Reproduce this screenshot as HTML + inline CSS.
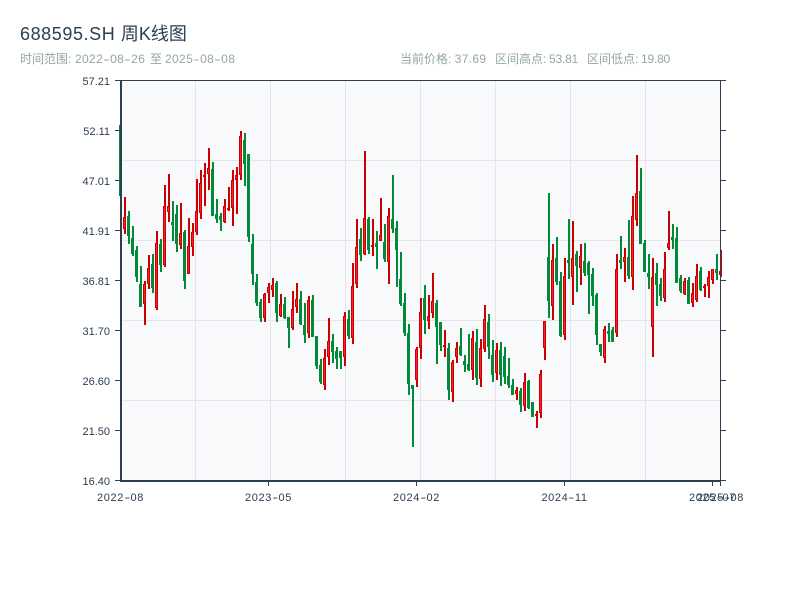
<!DOCTYPE html>
<html><head><meta charset="utf-8">
<style>
html,body{margin:0;padding:0;width:800px;height:600px;background:#fff;overflow:hidden}
body{font-family:"Liberation Sans","Noto Sans CJK SC",sans-serif;position:relative}
div.t{position:absolute;white-space:nowrap;line-height:1}
.title{left:20px;top:25px;font-size:18px;color:#2c3e50}
.title span{letter-spacing:.58px}
.sub{top:53px;font-size:12px;color:#95a5a6}
.n{letter-spacing:.35px}
.m{letter-spacing:-.2px}
.y{width:60px;left:50px;text-align:right;font-size:11px;color:#2c3e50}
.x{width:80px;text-align:center;font-size:11px;color:#2c3e50;top:492.5px;letter-spacing:.6px}
b{font-weight:normal;display:inline-block;text-align:center;transform:scaleX(1.6)}
.x b{width:6.6px;letter-spacing:0}
.sub b{width:7px;letter-spacing:0}
svg{position:absolute;left:0;top:0}
</style></head><body>
<svg width="800" height="600" viewBox="0 0 800 600" fill="none">
<rect x="121" y="81" width="600" height="400" fill="#f8f9fa"/>
<path d="M121 160.5H721M121 240.5H721M121 320.5H721M121 400.5H721M195.5 81V481M270.5 81V481M345.5 81V481M420.5 81V481M495.5 81V481M570.5 81V481M645.5 81V481" stroke="#e3e5ea" stroke-width="1"/>
<path stroke="#008a3a" stroke-width="2" d="M121 125V196M129 211V244M133 226V256M137 246V282M141 266V307M153 254V293M161 239V272M173 201V241M177 205V252M185 230V289M213 162V216M217 199V223M221 213V231M245 133V186M249 154V242M253 234V285M257 274V306M261 299V322M277 281V322M285 297V319M289 317V348M301 291V325M305 303V343M313 295V337M317 336V369M321 359V384M333 334V363M337 347V369M341 351V369M349 310V339M361 228V261M369 217V254M377 231V269M385 224V262M393 175V233M397 221V287M401 252V306M405 293V336M409 324V395M413 385V447M425 285V334M437 300V364M441 322V351M449 343V400M461 328V356M465 355V372M469 334V371M477 329V385M489 314V359M493 340V382M501 342V386M505 347V384M509 358V388M513 379V395M521 388V412M529 380V409M533 402V417M549 193V318M557 237V285M561 272V337M569 219V279M577 251V292M585 243V276M589 261V314M593 268V306M597 293V345M601 344V356M609 323V342M613 327V342M621 236V269M629 220V279M641 168V244M645 240V272M649 254V289M657 263V306M661 278V301M673 224V249M677 227V283M681 275V293M689 277V304M701 267V291M717 254V280"/>
<path stroke="#008a3a" stroke-width="3" transform="translate(-.5 0)" d="M121 125V196M129 216V236M133 238V254M137 250V277M141 284V307M153 264V288M161 244V265M173 222V225M177 214V244M185 232V281M213 169V216M217 214V219M221 216V220M245 140V164M249 154V237M253 244V274M257 282V303M261 302V318M277 283V313M285 304V318M289 317V328M301 299V324M305 325V335M313 300V337M317 336V366M321 365V382M333 341V352M337 351V359M341 351V358M349 319V336M361 239V255M369 219V250M377 243V247M385 242V259M393 219V229M397 228V250M401 279V304M405 303V333M409 333V384M413 385V389M425 298V320M437 303V327M441 322V345M449 348V390M461 346V355M465 361V365M469 364V370M477 342V378M489 322V347M493 355V375M501 350V375M505 356V377M509 376V385M513 385V395M521 391V405M529 381V408M533 402V417M549 257V301M557 258V282M561 281V336M569 260V263M577 254V266M585 261V273M589 263V275M593 274V296M597 295V335M601 344V352M609 331V334M613 330V342M621 260V263M629 257V276M641 191V244M645 243V272M649 273V277M657 273V285M661 284V296M673 237V240M677 238V283M681 278V291M689 280V304M701 271V290M717 269V273"/>
<path stroke="#cc0000" stroke-width="2" d="M125 197V234M145 281V325M149 255V289M157 231V310M165 185V267M169 174V222M181 203V249M189 218V274M193 223V256M197 179V235M201 170V219M205 163V206M209 148V190M225 199V223M229 187V211M233 170V226M237 167V214M241 131V180M265 293V322M269 283V303M273 278V297M281 294V317M293 291V330M297 283V313M309 296V338M325 349V390M329 318V365M345 312V366M353 263V344M357 219V288M365 151V255M373 219V256M381 198V241M389 208V284M417 347V387M421 298V359M429 295V329M433 273V318M445 330V357M453 360V402M457 342V363M473 331V380M481 339V387M485 305V352M497 343V380M517 387V400M525 373V411M537 411V428M541 370V418M545 321V360M553 244V320M565 258V340M573 221V305M581 244V285M605 326V363M617 254V337M625 248V282M633 196V290M637 155V226M653 258V357M665 252V302M669 211V250M685 278V295M693 283V307M697 264V302M705 284V297M709 271V298M713 269V284M721 250V277"/>
<path stroke="#cc0000" stroke-width="3" transform="translate(-.5 0)" d="M125 217V229M145 284V304M149 268V284M157 243V308M165 206V265M169 206V212M181 233V245M189 246V274M193 232V247M197 211V232M201 183V213M205 175V177M209 168V174M225 206V222M229 208V210M233 180V208M237 175V180M241 136V175M265 294V318M269 287V293M273 285V290M281 304V316M293 309V328M297 299V307M309 300V333M325 358V385M329 341V357M345 316V357M353 286V338M357 247V284M365 218V254M373 245V247M381 235V241M389 216V262M417 349V380M421 312V348M429 316V321M433 301V313M445 345V347M453 362V392M457 348V357M473 338V370M481 348V379M485 319V349M497 350V373M517 390V394M525 382V406M537 414V416M541 374V413M545 321V348M553 260V306M565 276V335M573 258V277M581 256V268M605 329V358M617 269V333M625 257V262M633 216V277M637 193V220M653 277V327M665 269V298M669 243V248M685 281V294M693 293V303M697 276V300M705 286V288M709 277V286M713 269V280M721 271V275"/>
<path stroke="#f5222d" stroke-width="1" transform="translate(-.5 0)" d="M125 218V228M145 285V303M149 269V283M157 244V307M165 207V264M169 207V211M181 234V244M189 247V273M193 233V246M197 212V231M201 184V212M209 169V173M225 207V221M233 181V207M237 176V179M241 137V174M265 295V317M269 288V292M273 286V289M281 305V315M293 310V327M297 300V306M309 301V332M325 359V384M329 342V356M345 317V356M353 287V337M357 248V283M365 219V253M381 236V240M389 217V261M417 350V379M421 313V347M429 317V320M433 302V312M453 363V391M457 349V356M473 339V369M481 349V378M485 320V348M497 351V372M517 391V393M525 383V405M541 375V412M545 322V347M553 261V305M565 277V334M573 259V276M581 257V267M605 330V357M617 270V332M625 258V261M633 217V276M637 194V219M653 278V326M665 270V297M669 244V247M685 282V293M693 294V302M697 277V299M709 278V285M713 270V279M721 272V274"/>
<path stroke="#2c3e50" stroke-width="1" d="M120 80.5H721M720.5 80V486M115 80.5H120M115 130.5H120M115 180.5H120M115 230.5H120M115 280.5H120M115 330.5H120M115 380.5H120M115 430.5H120M115 480.5H120M720 80.5H726M720 130.5H726M720 180.5H726M720 230.5H726M720 280.5H726M720 330.5H726M720 380.5H726M720 430.5H726M720 480.5H726M268.5 481V486M416.5 481V486M564.5 481V486M712.5 481V486"/>
<path stroke="#2c3e50" stroke-width="2" d="M121 80V482M120 481H721"/>
</svg>
<div class="t title"><span>688595.SH </span>周K线图</div>
<div class="t sub" style="left:20px">时间范围:</div>
<div class="t sub n" style="left:75px">2022<b>-</b>08<b>-</b>26</div>
<div class="t sub" style="left:150px">至</div>
<div class="t sub n" style="left:165px">2025<b>-</b>08<b>-</b>08</div>
<div class="t sub" style="left:400px">当前价格: <span class="n">37.69</span></div>
<div class="t sub" style="left:495px">区间高点:</div>
<div class="t sub m" style="left:549px">53.81</div>
<div class="t sub" style="left:587px">区间低点:</div>
<div class="t sub m" style="left:641px">19.80</div>
<div class="t y" style="top:77px">57.21</div>
<div class="t y" style="top:127px">52.11</div>
<div class="t y" style="top:177px">47.01</div>
<div class="t y" style="top:227px">41.91</div>
<div class="t y" style="top:277px">36.81</div>
<div class="t y" style="top:327px">31.70</div>
<div class="t y" style="top:377px">26.60</div>
<div class="t y" style="top:427px">21.50</div>
<div class="t y" style="top:477px">16.40</div>
<div class="t x" style="left:80.5px">2022<b>-</b>08</div>
<div class="t x" style="left:228.5px">2023<b>-</b>05</div>
<div class="t x" style="left:376.5px">2024<b>-</b>02</div>
<div class="t x" style="left:524.5px">2024<b>-</b>11</div>
<div class="t x" style="left:672.5px">2025<b>-</b>07</div>
<div class="t x" style="left:680.5px">2025<b>-</b>08</div>
</body></html>
